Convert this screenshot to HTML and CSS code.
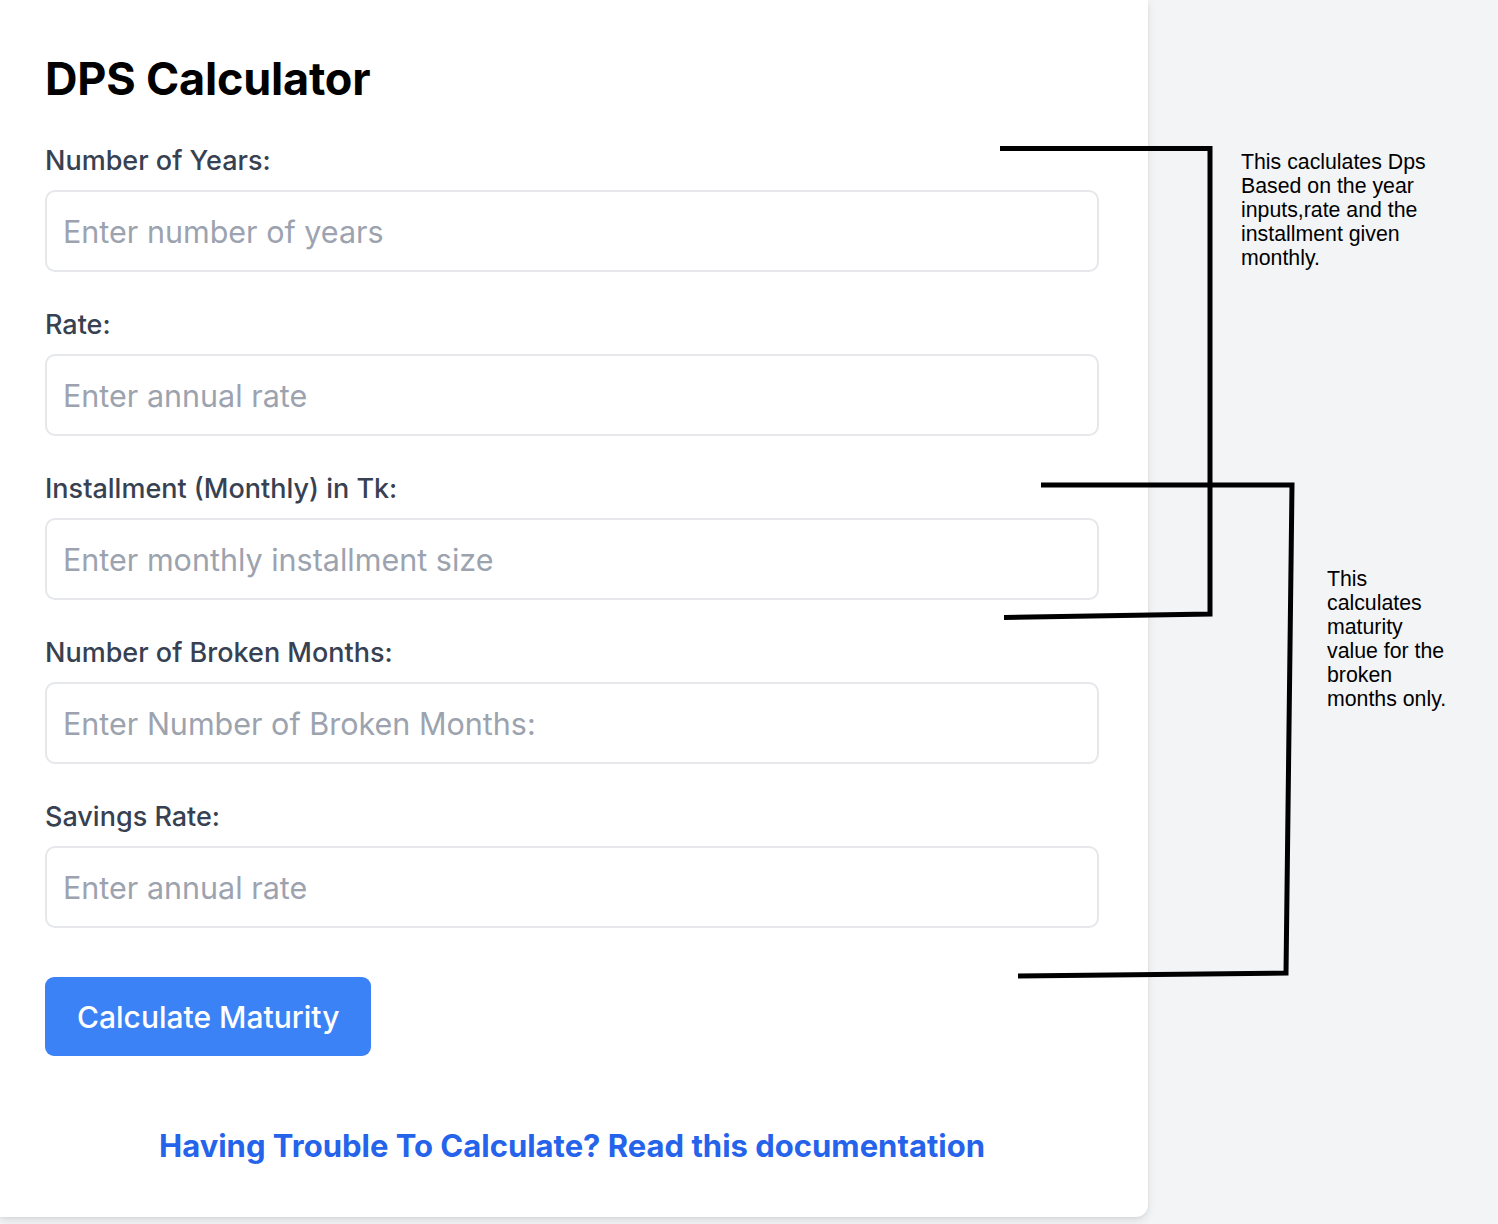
FILE: index.html
```html
<!DOCTYPE html>
<html lang="en">
<head>
<meta charset="utf-8">
<title>DPS Calculator</title>
<link rel="stylesheet" href="styles.css">
</head>
<body>
<div class="page">
  <main class="card">
    <h1 class="title">DPS Calculator</h1>
    <form class="form" onsubmit="return false">
      <div class="field">
        <label class="label" for="years">Number of Years:</label>
        <input class="input" id="years" type="text" placeholder="Enter number of years">
      </div>
      <div class="field">
        <label class="label" for="rate">Rate:</label>
        <input class="input" id="rate" type="text" placeholder="Enter annual rate">
      </div>
      <div class="field">
        <label class="label" for="inst">Installment (Monthly) in Tk:</label>
        <input class="input" id="inst" type="text" placeholder="Enter monthly installment size">
      </div>
      <div class="field">
        <label class="label" for="broken">Number of Broken Months:</label>
        <input class="input" id="broken" type="text" placeholder="Enter Number of Broken Months:">
      </div>
      <div class="field">
        <label class="label" for="srate">Savings Rate:</label>
        <input class="input" id="srate" type="text" placeholder="Enter annual rate">
      </div>
      <div class="actions">
        <button class="btn" type="submit">Calculate Maturity</button>
      </div>
    </form>
    <p class="doc"><a class="doc-link" href="#">Having Trouble To Calculate? Read this documentation</a></p>
  </main>

  <div class="annotations">
    <svg class="brackets" width="1498" height="1224" viewBox="0 0 1498 1224">
      <polyline points="1000,148.5 1210,148.5 1210,614 1004,617.5" fill="none" stroke="#000" stroke-width="5" stroke-linejoin="miter"/>
      <polyline points="1041,485 1292,485 1286,973 1018,976" fill="none" stroke="#000" stroke-width="5" stroke-linejoin="miter"/>
    </svg>
    <p class="note note-1">This caclulates Dps<br>Based on the year<br>inputs,rate and the<br>installment given<br>monthly.</p>
    <p class="note note-2">This<br>calculates<br>maturity<br>value for the<br>broken<br>months only.</p>
  </div>
</div>
</body>
</html>
```

FILE: styles.css
```css
html, body {
  margin: 0;
  padding: 0;
}

body {
  background: #f3f4f6;
  font-family: Inter, "Noto Sans", "Liberation Sans", sans-serif;
  width: 1498px;
  height: 1224px;
  overflow: hidden;
}

.page {
  position: relative;
  width: 1498px;
  height: 1224px;
}

.card {
  box-sizing: border-box;
  width: 1148px;
  background: #ffffff;
  padding: 52px 49px 51px 45px;
  border-radius: 0 0 12px 0;
  box-shadow: 0 4px 10px rgba(0, 0, 0, 0.09), 0 1px 3px rgba(0, 0, 0, 0.06);
}

.title {
  margin: 0 0 37px;
  font-size: 45px;
  line-height: 54px;
  font-weight: 700;
  color: #000000;
  letter-spacing: -0.2px;
}

.form {
  display: flex;
  flex-direction: column;
  gap: 35px;
  margin: 0;
}

.field {
  display: flex;
  flex-direction: column;
  gap: 11px;
}

.label {
  font-size: 27px;
  line-height: 36px;
  font-weight: 500;
  color: #374151;
}

.input {
  box-sizing: border-box;
  height: 82px;
  width: 100%;
  margin: 0;
  padding: 0 16px;
  border: 2px solid #e5e7eb;
  border-radius: 10px;
  background: #ffffff;
  font-family: inherit;
  font-size: 30.5px;
  color: #111827;
  outline: none;
}

.input::placeholder {
  color: #9ca3af;
  opacity: 1;
}

.actions {
  display: flex;
  margin-top: 14px;
}

.btn {
  height: 79px;
  padding: 0 32px;
  border: 0;
  border-radius: 9px;
  background: #3b82f6;
  color: #ffffff;
  font-family: inherit;
  font-size: 30px;
  font-weight: 500;
  line-height: 36px;
  cursor: pointer;
}

.doc {
  margin: 70px 0 0;
  text-align: center;
  font-size: 31px;
  line-height: 40px;
  font-weight: 700;
}

.doc-link {
  color: #2563eb;
  text-decoration: none;
}

.annotations {
  position: absolute;
  inset: 0;
  pointer-events: none;
}

.brackets {
  position: absolute;
  left: 0;
  top: 0;
}

.note {
  position: absolute;
  margin: 0;
  font-family: "Liberation Sans", Arial, sans-serif;
  font-size: 21.3px;
  line-height: 24px;
  color: #000000;
}

.note-1 {
  left: 1241px;
  top: 150px;
}

.note-2 {
  left: 1327px;
  top: 567px;
}
```
